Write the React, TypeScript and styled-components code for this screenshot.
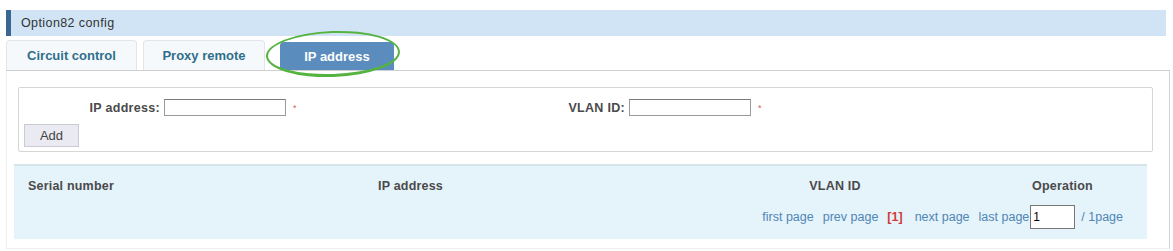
import React from "react";
import styled, { createGlobalStyle } from "styled-components";

const Global = createGlobalStyle`
  html, body { margin: 0; padding: 0; background: #ffffff; }
  body { font-family: "Liberation Sans", Arial, sans-serif; font-size: 12px; color: #444; }
`;

const Page = styled.div`
  width: 1173px;
  height: 251px;
  padding: 10px 0 0 6px;
  box-sizing: border-box;
  position: relative;
  overflow: hidden;
`;

const TitleBar = styled.div`
  width: 1160px;
  height: 26px;
  box-sizing: border-box;
  background: #d0e4f6;
  border-left: 5px solid #3a6690;
  display: flex;
  align-items: center;
  padding-left: 10px;
  font-size: 12.5px;
  letter-spacing: 0.4px;
  color: #333;
`;

const TabRow = styled.div`
  width: 1164px;
  height: 35px;
  display: flex;
  align-items: flex-end;
  box-sizing: border-box;
  border-bottom: 1px solid #cfcfcf;
  position: relative;
`;

const Tab = styled.div<{ $w: number; $ml: number; $active?: boolean }>`
  width: ${(p) => p.$w}px;
  margin-left: ${(p) => p.$ml}px;
  height: ${(p) => (p.$active ? 28 : 30)}px;
  box-sizing: border-box;
  display: flex;
  align-items: center;
  justify-content: center;
  font-weight: bold;
  font-size: 13px;
  border-radius: 4px 4px 0 0;
  background: ${(p) => (p.$active ? "#5a8cbd" : "#f6f9fb")};
  color: ${(p) => (p.$active ? "#ffffff" : "#2f6f8c")};
  border: 1px solid ${(p) => (p.$active ? "#5a8cbd" : "#e2e6e9")};
  border-bottom: none;
`;

const Highlight = styled.div`
  position: absolute;
  left: 260px;
  top: -5px;
  width: 134px;
  height: 46px;
  border: 2px solid #55b340;
  border-bottom-width: 3px;
  border-radius: 50%;
  box-sizing: border-box;
  pointer-events: none;
  transform: rotate(-2deg);
`;

const Panel = styled.div`
  width: 1164px;
  height: 178px;
  box-sizing: border-box;
  border-right: 1px solid #d4d4d4;
  border-left: 1px solid #eeeeee;
  border-bottom: 1px solid #eeeeee;
  padding: 16px 0 0 11px;
`;

const FormBox = styled.div`
  width: 1135px;
  height: 65px;
  box-sizing: border-box;
  border: 1px solid #d6d6d6;
  border-radius: 2px;
  padding: 11px 0 0 5px;
  display: flex;
  flex-direction: column;
  gap: 8px;
`;

const FieldRow = styled.div`
  display: flex;
  align-items: center;
  height: 17px;
`;

const Label = styled.label<{ $w: number }>`
  width: ${(p) => p.$w}px;
  flex: none;
  text-align: right;
  white-space: nowrap;
  font-weight: bold;
  font-size: 12.5px;
  letter-spacing: 0.3px;
  color: #4a4a4a;
  padding-right: 4px;
  box-sizing: border-box;
`;

const TextInput = styled.input`
  width: 122px;
  height: 17px;
  flex: none;
  box-sizing: border-box;
  border: 1px solid #9a9a9a;
  border-top-color: #7a7a7a;
  padding: 0 2px;
  font-family: "Liberation Sans", Arial, sans-serif;
  font-size: 11px;
  margin: 0;
`;

const Star = styled.span`
  color: #e05a5a;
  font-size: 9px;
  margin-left: 7px;
  width: 10px;
  flex: none;
`;

const AddButton = styled.button`
  width: 55px;
  height: 23px;
  box-sizing: border-box;
  background: #eaeaf3;
  border: 1px solid #cacad4;
  font-family: "Liberation Sans", Arial, sans-serif;
  font-size: 13px;
  color: #444;
  padding: 0;
  margin: 0;
`;

const Table = styled.div`
  width: 1133px;
  height: 75px;
  margin: 12px 0 0 -4px;
  box-sizing: border-box;
  background: #e5f3fb;
  border-top: 2px solid #d5e3ea;
  display: flex;
  flex-direction: column;
`;

const HeadRow = styled.div`
  display: grid;
  grid-template-columns: 364px 352px 210px 207px;
  height: 38px;
  align-items: center;
  padding-top: 2px;
  box-sizing: border-box;
  font-weight: bold;
  font-size: 12.5px;
  letter-spacing: 0.2px;
  color: #4a4a4a;
`;

const HeadCell = styled.div<{ $align?: string; $pl?: number }>`
  text-align: ${(p) => p.$align || "left"};
  padding-left: ${(p) => p.$pl || 0}px;
`;

const PagerRow = styled.div`
  display: flex;
  justify-content: flex-end;
  align-items: center;
  padding-right: 24px;
  height: 26px;
  font-size: 12.5px;
  color: #4f86b5;
  gap: 9px;
`;

const PageInput = styled.input`
  width: 45px;
  height: 24px;
  box-sizing: border-box;
  border: 1px solid #777;
  font-family: "Liberation Sans", Arial, sans-serif;
  font-size: 12px;
  padding: 0 2px;
  margin: 0 -3px 0 -8px;
`;

const Current = styled.span`
  color: #d23a3a;
  font-weight: bold;
  margin-right: 3px;
`;

export default function App() {
  return (
    <>
      <Global />
      <Page>
        <TitleBar>Option82 config</TitleBar>
        <TabRow>
          <Tab $w={131} $ml={0}>Circuit control</Tab>
          <Tab $w={122} $ml={6}>Proxy remote</Tab>
          <Tab $w={114} $ml={15} $active>IP address</Tab>
          <Highlight />
        </TabRow>
        <Panel>
          <FormBox>
            <FieldRow>
              <Label $w={140}>IP address:</Label>
              <TextInput />
              <Star>*</Star>
              <Label $w={326}>VLAN ID:</Label>
              <TextInput />
              <Star>*</Star>
            </FieldRow>
            <div>
              <AddButton>Add</AddButton>
            </div>
          </FormBox>
          <Table>
            <HeadRow>
              <HeadCell $pl={14}>Serial number</HeadCell>
              <HeadCell>IP address</HeadCell>
              <HeadCell $align="center">VLAN ID</HeadCell>
              <HeadCell $pl={92}>Operation</HeadCell>
            </HeadRow>
            <PagerRow>
              <span>first page</span>
              <span>prev page</span>
              <Current>[1]</Current>
              <span>next page</span>
              <span>last page</span>
              <PageInput defaultValue="1" />
              <span>/ 1page</span>
            </PagerRow>
          </Table>
        </Panel>
      </Page>
    </>
  );
}
